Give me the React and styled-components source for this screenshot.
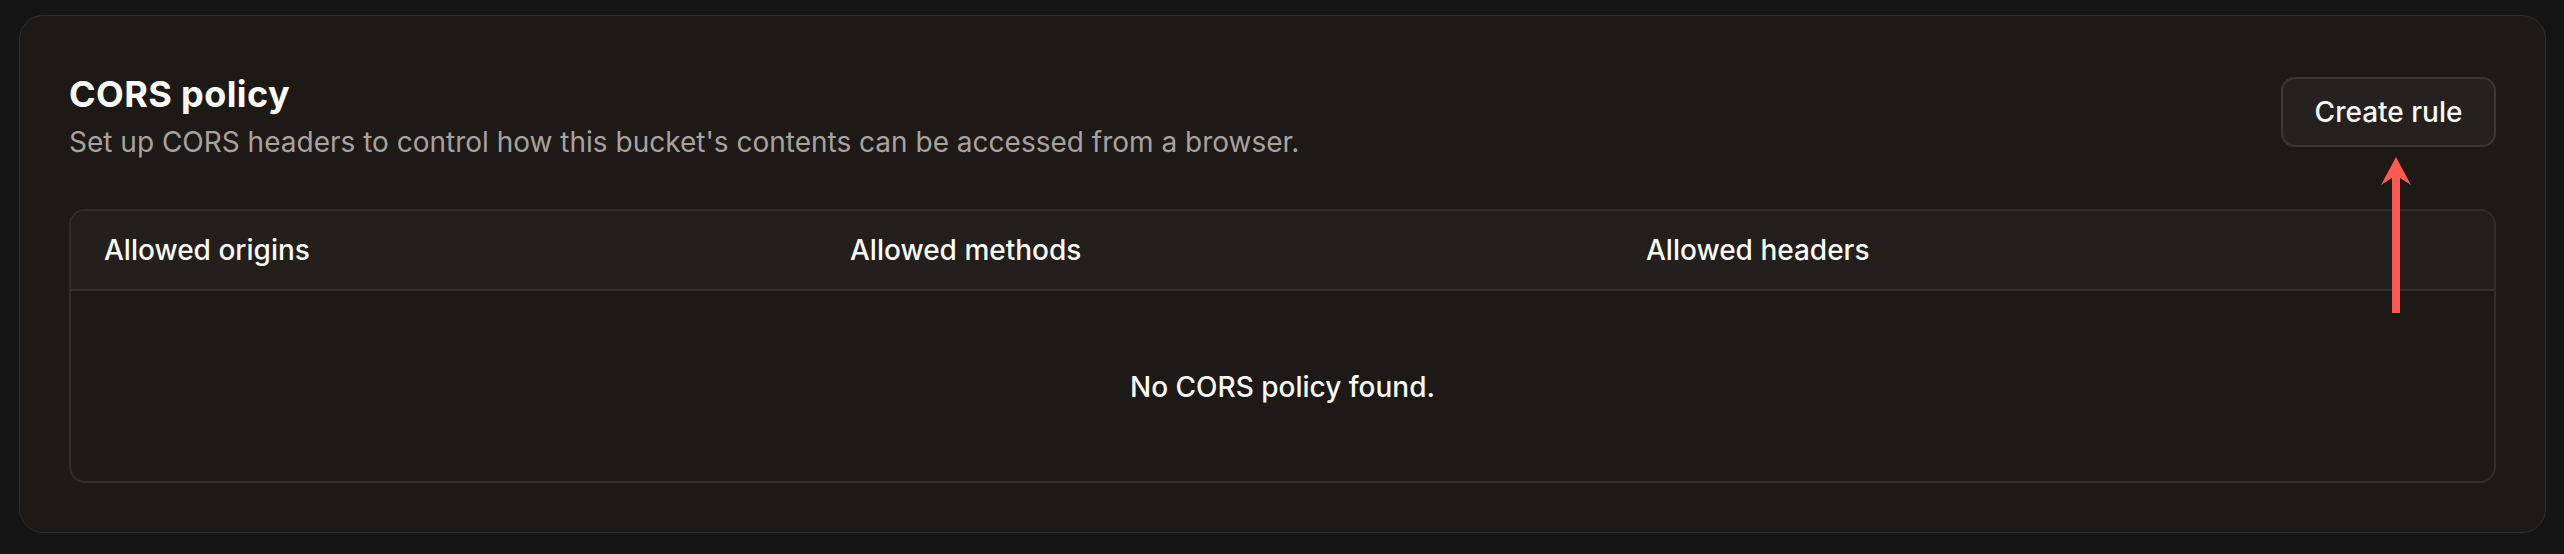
import React from 'react';
import styled, { createGlobalStyle } from 'styled-components';

const GlobalStyle = createGlobalStyle`
  html, body {
    margin: 0;
    padding: 0;
    background: #151515;
  }
  body {
    font-family: Inter, "Noto Sans", "Liberation Sans", sans-serif;
    color: #fafaf9;
    -webkit-font-smoothing: antialiased;
  }
`;

const Page = styled.div`
  padding: 15px 18px 21px 19px;
`;

const Card = styled.section`
  box-sizing: border-box;
  height: 518px;
  background: #1c1917;
  border: 1px solid #302d2b;
  border-radius: 24px;
  padding: 56px 49px 49px 49px;
  display: flex;
  flex-direction: column;
  gap: 49px;
`;

const Header = styled.div`
  display: flex;
  align-items: flex-start;
  justify-content: space-between;
`;

const TitleBlock = styled.div`
  display: flex;
  flex-direction: column;
`;

const Title = styled.h2`
  margin: 0;
  font-size: 36px;
  line-height: 44px;
  font-weight: 700;
  letter-spacing: 0.4px;
  color: #fafaf9;
`;

const Subtitle = styled.p`
  margin: 8px 0 0;
  font-size: 28px;
  line-height: 36px;
  font-weight: 400;
  color: #a8a29e;
`;

const ActionWrap = styled.div`
  position: relative;
  margin-top: 5px;
`;

const Button = styled.button`
  box-sizing: border-box;
  width: 215px;
  height: 70px;
  border-radius: 14px;
  border: 2px solid #3a3735;
  background: #242120;
  color: #fafaf9;
  font-family: inherit;
  font-size: 28px;
  font-weight: 500;
  cursor: pointer;
`;

const Arrow = styled.svg`
  position: absolute;
  top: calc(100% + 10px);
  left: calc(50% + 7px);
  transform: translateX(-50%);
`;

const Table = styled.div`
  border: 2px solid #302d2b;
  border-radius: 16px;
  overflow: hidden;
`;

const HeadRow = styled.div`
  display: grid;
  grid-template-columns: 746px 796px 1fr;
  height: 78px;
  align-items: center;
  background: #221f1d;
  border-bottom: 2px solid #34312f;
`;

const HeadCell = styled.div`
  padding-left: 33px;
  font-size: 28px;
  font-weight: 500;
  color: #fafaf9;
`;

const EmptyRow = styled.div`
  height: 192px;
  display: flex;
  align-items: center;
  justify-content: center;
  font-size: 28px;
  font-weight: 500;
  color: #fafaf9;
`;

const columns = ['Allowed origins', 'Allowed methods', 'Allowed headers'];

export default function App() {
  return (
    <Page>
      <GlobalStyle />
      <Card>
        <Header>
          <TitleBlock>
            <Title>CORS policy</Title>
            <Subtitle>
              Set up CORS headers to control how this bucket's contents can be accessed from a browser.
            </Subtitle>
          </TitleBlock>
          <ActionWrap>
            <Button>Create rule</Button>
            <Arrow width="30" height="157" viewBox="0 0 30 157">
              <path d="M15 0 L30 28 L19 21 L19 156 L11 156 L11 21 L0 28 Z" fill="#ff5a4f" />
            </Arrow>
          </ActionWrap>
        </Header>
        <Table>
          <HeadRow>
            {columns.map((c) => (
              <HeadCell key={c}>{c}</HeadCell>
            ))}
          </HeadRow>
          <EmptyRow>No CORS policy found.</EmptyRow>
        </Table>
      </Card>
    </Page>
  );
}
